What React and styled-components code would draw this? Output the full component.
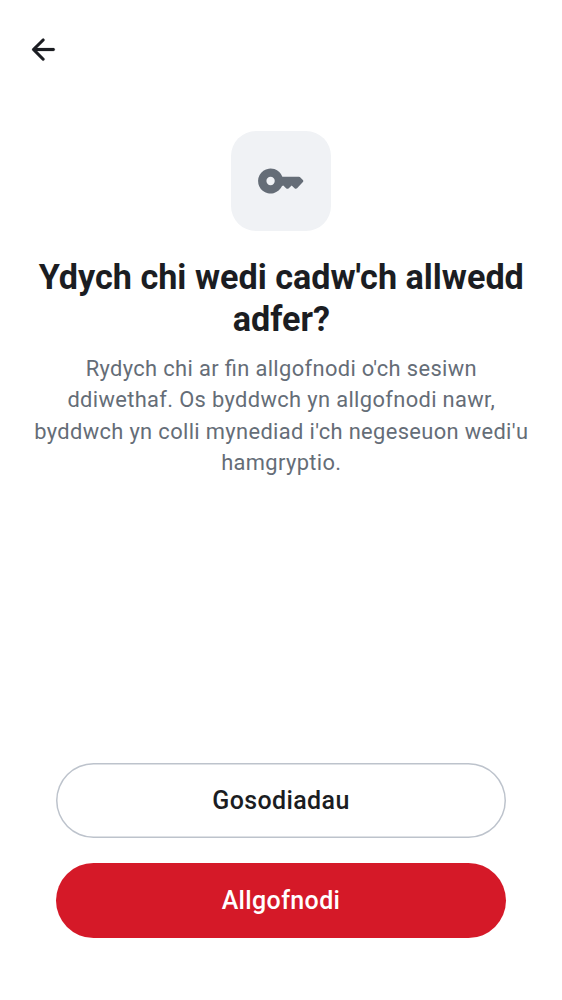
import React from 'react';
import styled, { createGlobalStyle } from 'styled-components';

const GlobalStyle = createGlobalStyle`
  * { box-sizing: border-box; }
  body {
    margin: 0;
    background: #ffffff;
    font-family: Roboto, "Liberation Sans", sans-serif;
    color: #1b1d22;
  }
`;

const Screen = styled.div`
  display: flex;
  flex-direction: column;
  height: 1000px;
  width: 100%;
  background: #ffffff;
`;

const TopBar = styled.header`
  display: flex;
  align-items: center;
  height: 100px;
  padding-left: 25px;
`;

const BackButton = styled.button`
  display: flex;
  padding: 0;
  border: 0;
  background: none;
  color: #1b1d22;
`;

const Content = styled.main`
  display: flex;
  flex-direction: column;
  align-items: center;
  flex: 1;
  padding: 31px 31px 0;
  text-align: center;
`;

const IconTile = styled.div`
  display: flex;
  align-items: center;
  justify-content: center;
  width: 100px;
  height: 100px;
  border-radius: 25px;
  background: #f0f2f5;
  color: #656d77;
`;

const Title = styled.h1`
  margin: 25px 0 0;
  padding-left: 0.6px;
  font-size: 34.17px;
  font-weight: 700;
  line-height: 42px;
`;

const Message = styled.p`
  margin: 13px 0 0;
  padding-left: 0.6px;
  font-size: 21.86px;
  line-height: 31.25px;
  letter-spacing: 0.36px;
  font-feature-settings: "liga" 1;
  color: #656d77;
`;

const Actions = styled.footer`
  display: flex;
  flex-direction: column;
  gap: 25px;
  padding: 0 56px 62.4px;
`;

const Button = styled.button`
  height: 75px;
  padding: 0;
  border: 0;
  border-radius: 37.5px;
  box-shadow: ${({ $primary }) => ($primary ? 'none' : 'inset 0 0 0 1.5px #bdc3cc')};
  background: ${({ $primary }) => ($primary ? '#d51928' : '#ffffff')};
  color: ${({ $primary }) => ($primary ? '#ffffff' : '#1b1d22')};
  font-family: inherit;
  font-size: 24.98px;
  font-weight: 500;
  letter-spacing: 0.38px;
`;

const ArrowIcon = () => (
  <svg width="36" height="36" viewBox="-0.4 0 24.6 24.6" fill="currentColor" stroke="currentColor" strokeWidth="0.15">
    <path d="m7.825 13 4.9 4.9c.2.2.296.433.287.7a1.02 1.02 0 0 1-.312.7c-.2.183-.433.28-.7.287a.93.93 0 0 1-.7-.287l-6.6-6.6a.877.877 0 0 1-.213-.325A1.107 1.107 0 0 1 4.425 12c0-.133.02-.258.062-.375A.877.877 0 0 1 4.7 11.3l6.6-6.6a.933.933 0 0 1 .688-.275c.275 0 .512.092.712.275.2.2.3.438.3.713s-.1.512-.3.712L7.825 11H19c.283 0 .52.096.713.287.191.192.287.43.287.713s-.096.52-.287.713A.968.968 0 0 1 19 13H7.825Z" />
  </svg>
);

const KeyIcon = () => (
  <svg width="50" height="50" viewBox="0 0 24 24" fill="currentColor" fillRule="evenodd">
    <path d="M12.66 10H20.6c.27 0 .52.1.71.29l1.18 1.18c.3.3.3.76.02 1.06l-2.8 3c-.3.3-.76.32-1.08.04l-1.5-1.4-1.52 1.4c-.3.26-.74.26-1.04 0L13.1 14.15 12.5 14.4A6 6 0 1 1 12.66 10ZM7 14a2 2 0 1 0 0-4 2 2 0 0 0 0 4Z" />
  </svg>
);

export default function App() {
  return (
    <>
      <GlobalStyle />
      <Screen>
        <TopBar>
          <BackButton aria-label="Yn ôl">
            <ArrowIcon />
          </BackButton>
        </TopBar>
        <Content>
          <IconTile>
            <KeyIcon />
          </IconTile>
          <Title>Ydych chi wedi cadw'ch allwedd adfer?</Title>
          <Message>
            Rydych chi ar fin allgofnodi o'ch sesiwn ddiwethaf. Os byddwch yn allgofnodi nawr,
            byddwch yn colli mynediad i'ch negeseuon wedi'u hamgryptio.
          </Message>
        </Content>
        <Actions>
          <Button>Gosodiadau</Button>
          <Button $primary>Allgofnodi</Button>
        </Actions>
      </Screen>
    </>
  );
}
